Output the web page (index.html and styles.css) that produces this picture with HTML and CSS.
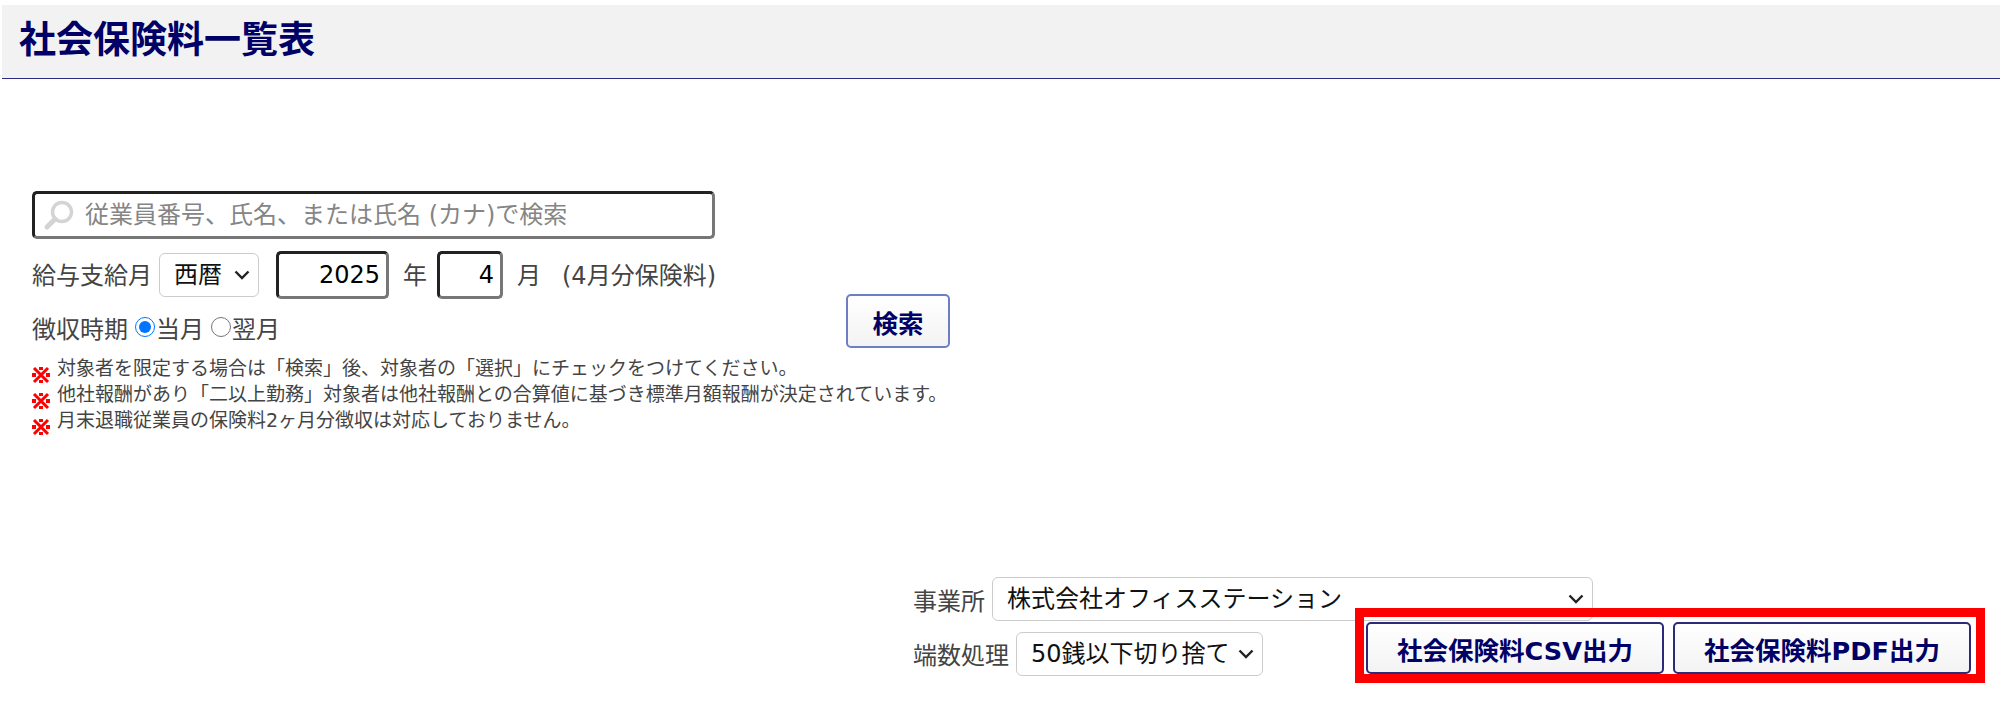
FILE: index.html
```html
<!DOCTYPE html>
<html lang="ja">
  <head>
    <meta charset="UTF-8" />
    <title>社会保険料一覧表</title>
    <link rel="stylesheet" href="styles.css">
  </head>
  <body>
    <!-- Title -->
    <div class="title-bar"><h1 class="title">社会保険料一覧表</h1></div>

    <!-- Search -->
    <div class="search-area">
      <div class="search-left">
        <div class="keyword-box">
          <svg class="loupe" width="32" height="32" viewBox="0 0 32 32">
            <circle cx="19" cy="13" r="9.5" fill="none" stroke="#d4d4d4" stroke-width="3.5"/>
            <path d="M12 20 L4 28" stroke="#d4d4d4" stroke-width="5" stroke-linecap="round"/>
          </svg>
          <span class="placeholder">従業員番号、氏名、または氏名 (カナ)で検索</span>
        </div>
        <div class="row pay-row">
          <span>給与支給月</span>
          <select class="pick era"><option>西暦</option></select>
          <input class="num year" type="text" value="2025">
          <span class="unit">年</span>
          <input class="num month" type="text" value="4">
          <span class="unit">月</span>
          <span class="note-month">(4月分保険料)</span>
        </div>
        <div class="row timing-row">
          <span>徴収時期</span>
          <label class="radio"><input type="radio" name="timing" checked>当月</label>
          <label class="radio"><input type="radio" name="timing">翌月</label>
        </div>
      </div>
      <button class="btn search-btn">検索</button>
    </div>

    <!-- Notes -->
    <ul class="notes">
      <li>
        <svg class="mark" width="18" height="18" viewBox="0 0 18 18"><use href="#kome"/></svg>
        対象者を限定する場合は「検索」後、対象者の「選択」にチェックをつけてください。
      </li>
      <li>
        <svg class="mark" width="18" height="18" viewBox="0 0 18 18"><use href="#kome"/></svg>
        他社報酬があり「二以上勤務」対象者は他社報酬との合算値に基づき標準月額報酬が決定されています。
      </li>
      <li>
        <svg class="mark" width="18" height="18" viewBox="0 0 18 18"><use href="#kome"/></svg>
        月末退職従業員の保険料2ヶ月分徴収は対応しておりません。
      </li>
    </ul>

    <!-- Output -->
    <div class="output-area">
      <div class="output-left">
        <div class="row office-row">
          <span>事業所</span>
          <select class="pick office"><option>株式会社オフィスステーション</option></select>
        </div>
        <div class="row round-row">
          <span>端数処理</span>
          <select class="pick rounding"><option>50銭以下切り捨て</option></select>
        </div>
      </div>
      <div class="output-btns">
        <button class="btn out-btn">社会保険料CSV出力</button>
        <button class="btn out-btn">社会保険料PDF出力</button>
      </div>
    </div>

    <!-- Red note mark, used by the list above -->
    <svg class="defs" width="0" height="0">
      <g id="kome" fill="#f00">
        <path d="M2 2 L16 16 M16 2 L2 16" stroke="#f00" stroke-width="3" fill="none"/>
        <rect x="7" y="1" width="4" height="3"/>
        <rect x="7" y="14" width="4" height="3"/>
        <rect x="0" y="7" width="4" height="4"/>
        <rect x="14" y="7" width="4" height="4"/>
      </g>
    </svg>
  </body>
</html>
```

FILE: styles.css
```css
/* Global */
body {
  margin: 0;
  padding: 5px 0 0 2px;
  background-color: #fff;
  color: #444;
  font-family: "DejaVu Sans", "Noto Sans CJK JP", sans-serif;
  font-size: 24px;
  overflow: hidden;
}

.defs {
  display: block;
}

/* Title */
.title-bar {
  height: 73px;
  background-color: #f2f2f2;
  border-bottom: 1px solid #2b2b85;
  display: flex;
  align-items: center;
  padding-left: 17px;
}

.title {
  margin: 0 0 2px;
  font-size: 37px;
  font-weight: 700;
  color: #000066;
  line-height: 1;
}

/* Search */
.search-area {
  display: flex;
  align-items: flex-end;
  margin: 112px 0 0 30px;
}

.search-left {
  width: 814px;
  padding-bottom: 3px;
}

.keyword-box {
  width: 683px;
  height: 48px;
  box-sizing: border-box;
  border: 3px solid;
  border-color: #222 #777 #777 #222;
  border-radius: 5px;
  display: flex;
  align-items: center;
  padding-left: 8px;
  gap: 10px;
}

.placeholder {
  color: #858585;
  white-space: nowrap;
  margin-bottom: 6px;
}

.row {
  display: flex;
  align-items: center;
  white-space: nowrap;
}

.pay-row {
  margin-top: 12px;
  height: 48px;
}

.pay-row span {
  margin-bottom: 4px;
}

.pick {
  appearance: none;
  height: 44px;
  margin-left: 7px;
  padding: 0 30px 0 14px;
  background: #fff url("data:image/svg+xml,%3Csvg xmlns='http://www.w3.org/2000/svg' width='16' height='10' viewBox='0 0 16 10'%3E%3Cpath d='M1.5 1.5 L8 8 L14.5 1.5' fill='none' stroke='%23222' stroke-width='2.4'/%3E%3C/svg%3E") no-repeat right 8px center;
  border: 1px solid #ccc;
  border-radius: 6px;
  color: #111;
  font-family: inherit;
  font-size: 24px;
}

.era {
  width: 100px;
}

.num {
  height: 48px;
  box-sizing: border-box;
  border: 3px solid;
  border-color: #222 #777 #777 #222;
  border-radius: 5px;
  padding: 0 6px;
  text-align: right;
  color: #000;
  font-family: inherit;
  font-size: 24px;
  outline: none;
}

.year {
  width: 113px;
  margin-left: 17px;
}

.month {
  width: 66px;
  margin-left: 10px;
}

.unit {
  margin-left: 14px;
}

.note-month {
  margin-left: 21px;
}

.timing-row {
  margin-top: 10px;
  height: 36px;
}

.radio {
  display: flex;
  align-items: center;
}

.radio input {
  width: 20px;
  height: 20px;
  margin: 0 1px 0 7px;
  accent-color: #0075ff;
}

/* Buttons */
.btn {
  background: linear-gradient(#fff, #f3f3f3);
  border: 2px solid #2b2b7a;
  border-radius: 5px;
  color: #000066;
  font-family: inherit;
  font-weight: 700;
  font-size: 25.5px;
  padding: 0;
}

.search-btn {
  width: 104px;
  height: 54px;
  border-color: #6d7fc4;
}

/* Notes */
.notes {
  list-style: none;
  margin: 7px 0 0 30px;
  padding: 0;
  font-size: 19px;
  line-height: 26px;
}

.notes li {
  position: relative;
  padding-left: 25px;
  white-space: nowrap;
}

.mark {
  position: absolute;
  left: 0;
  top: 11px;
}

/* Output */
.output-area {
  display: flex;
  margin: 144px 0 0 911px;
}

.output-left {
  width: 442px;
  flex: none;
}

.office {
  width: 601px;
  flex: none;
}

.rounding {
  width: 247px;
}

.office-row {
  height: 44px;
}

.round-row {
  margin-top: 11px;
  height: 43px;
}

.output-btns {
  display: flex;
  flex: none;
  gap: 9px;
  box-sizing: border-box;
  width: 630px;
  height: 75px;
  margin-top: 31px;
  border: 9px solid #f00;
  padding: 5px 5px 0 2px;
}

.out-btn {
  width: 298px;
  height: 52px;
  white-space: nowrap;
}
```
